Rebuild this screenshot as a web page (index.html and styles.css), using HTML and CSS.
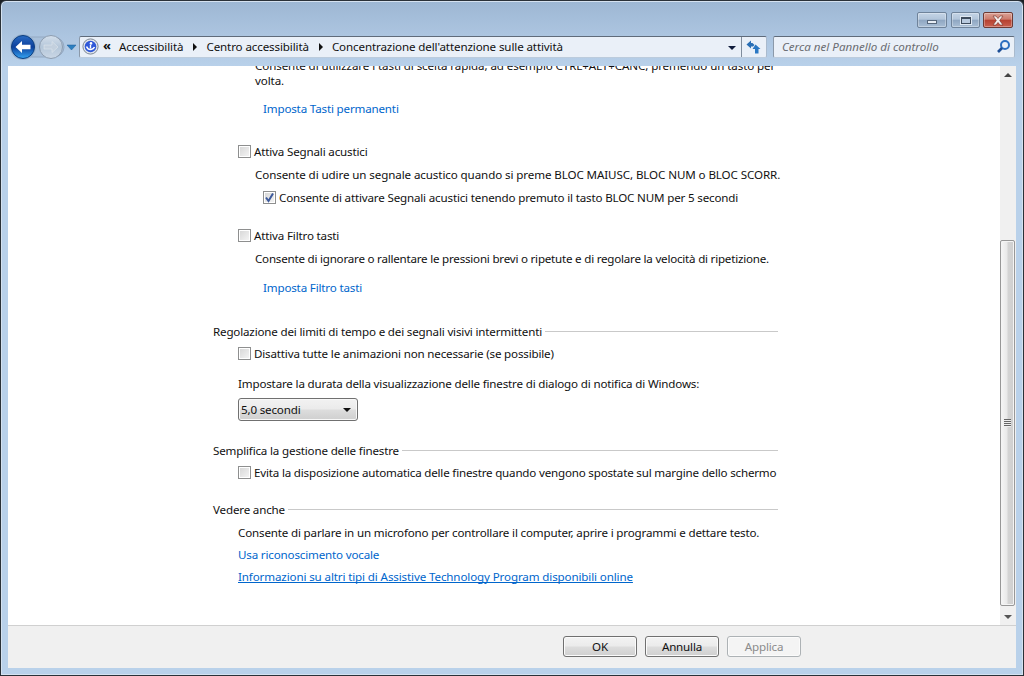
FILE: index.html
```html
<!DOCTYPE html>
<html lang="it">
<head>
<meta charset="utf-8">
<title>Concentrazione dell'attenzione sulle attività</title>
<link rel="stylesheet" href="styles.css">
</head>
<body>
<div class="window">
  <div class="caption-row">
    <div class="caption-buttons">
      <div class="cap cap-min"><span class="min-glyph"></span></div>
      <div class="cap cap-max"><span class="max-glyph"></span></div>
      <div class="cap cap-close">
        <svg width="16" height="11" viewBox="0 0 16 11"><path d="M3 1 H6 L8 3.5 L10 1 H13 L9.7 5.5 L13 10 H10 L8 7.5 L6 10 H3 L6.3 5.5 Z" fill="#f4eeee" stroke="#6f2c22" stroke-width=".6"/></svg>
      </div>
    </div>
  </div>
  <div class="toolbar">
    <div class="nav">
      <svg width="70" height="30" viewBox="0 0 70 30">
        <defs>
          <linearGradient id="bk" x1="0" y1="0" x2="0" y2="1"><stop offset="0" stop-color="#2a6cc4"/><stop offset=".5" stop-color="#0c3f9c"/><stop offset="1" stop-color="#35a4f2"/></linearGradient>
          <linearGradient id="fw" x1="0" y1="0" x2="0" y2="1"><stop offset="0" stop-color="#d5e0ec"/><stop offset=".5" stop-color="#b4c6d9"/><stop offset="1" stop-color="#cbd8e6"/></linearGradient>
        </defs>
        <rect x="14" y="5" width="42" height="20" rx="10" fill="#a9c0da" stroke="#94a9c2"/>
        <circle cx="15" cy="15" r="13" fill="#9db4cf"/>
        <circle cx="15" cy="15" r="11.5" fill="url(#bk)" stroke="#0c3f80"/>
        <path d="M7.5 15 L14 9 V12.7 H22.5 V17.3 H14 V21 Z" fill="#fff"/>
        <circle cx="43" cy="15" r="11.5" fill="url(#fw)" stroke="#8d9db0"/>
        <path d="M50 15 L44 9.5 V13 H36 V17 H44 V20.5 Z" fill="#c3d0de" stroke="#dfe7ef" stroke-width=".6"/>
        <path d="M59 13 H68 L63.5 18 Z" fill="#2c7fc0" stroke="#1c5f9a" stroke-width=".5"/>
      </svg>
    </div>
    <div class="address">
      <svg class="cp-icon" width="17" height="17" viewBox="0 0 17 17"><circle cx="8.5" cy="8.5" r="7.6" fill="#dfe4ea" stroke="#7d8794"/><circle cx="8.5" cy="8.5" r="5.8" fill="#2f58d8"/><circle cx="9" cy="5.4" r="1.3" fill="#fff"/><path d="M4.5 8.5 Q6 12 9 11.5 Q11.5 11 12.5 9" stroke="#fff" stroke-width="1.6" fill="none"/><path d="M8.5 7 V10.5" stroke="#fff" stroke-width="1.4"/></svg>
      <span class="chev">«</span>
      <span class="crumb">Accessibilità</span><span class="crumb-arrow"></span>
      <span class="crumb">Centro accessibilità</span><span class="crumb-arrow"></span>
      <span class="crumb">Concentrazione dell'attenzione sulle attività</span>
      <span class="addr-spacer"></span>
      <span class="addr-drop"></span>
      <span class="addr-refresh">
        <svg width="16" height="14" viewBox="0 0 16 14"><path d="M0.5 4.5 L5 0.5 V3 H6.5 L8.5 5 L7 6.5 H5 V8.5 Z" fill="#2a6fb5"/><path d="M9.5 4.5 L14.5 9 H12.5 V13.5 H9 V9 H6.5 Z" fill="#2a78c4"/></svg>
      </span>
    </div>
    <div class="search">
      <span class="search-text">Cerca nel Pannello di controllo</span>
      <svg width="15" height="15" viewBox="0 0 15 15"><circle cx="9" cy="6" r="4" fill="none" stroke="#2d6fc0" stroke-width="2"/><path d="M6 9 L2 13" stroke="#1e4f96" stroke-width="2.6"/></svg>
    </div>
  </div>
  <div class="pane">
    <div class="content">
      <div class="scroller">
        <p class="para first loose">Consente di utilizzare i tasti di scelta rapida, ad esempio CTRL+ALT+CANC, premendo un tasto per<br>volta.</p>
        <a class="link link-set gap-link1">Imposta Tasti permanenti</a>
        <label class="check gap-check1"><span class="box"></span>Attiva Segnali acustici</label>
        <p class="para gap-p1 loose">Consente di udire un segnale acustico quando si preme BLOC MAIUSC, BLOC NUM o BLOC SCORR.</p>
        <label class="check sub gap-sub"><span class="box on"><svg width="11" height="11" viewBox="0 0 11 11"><path d="M2 5.5 L4.5 9 L9 1.5" stroke="#3d5a9c" stroke-width="2" fill="none"/></svg></span>Consente di attivare Segnali acustici tenendo premuto il tasto BLOC NUM per 5 secondi</label>
        <label class="check gap-check2"><span class="box"></span>Attiva Filtro tasti</label>
        <p class="para gap-p1 tight">Consente di ignorare o rallentare le pressioni brevi o ripetute e di regolare la velocità di ripetizione.</p>
        <a class="link link-set gap-link2">Imposta Filtro tasti</a>
        <h2 class="heading gap-h1"><span>Regolazione dei limiti di tempo e dei segnali visivi intermittenti</span></h2>
        <label class="check gap-c3"><span class="box"></span>Disattiva tutte le animazioni non necessarie (se possibile)</label>
        <p class="para2 gap-p3">Impostare la durata della visualizzazione delle finestre di dialogo di notifica di Windows:</p>
        <div class="select"><span>5,0 secondi</span><i class="sel-arrow"></i></div>
        <h2 class="heading gap-h2"><span>Semplifica la gestione delle finestre</span></h2>
        <label class="check gap-c3 snug"><span class="box"></span>Evita la disposizione automatica delle finestre quando vengono spostate sul margine dello schermo</label>
        <h2 class="heading gap-h3"><span>Vedere anche</span></h2>
        <p class="para2 gap-p4">Consente di parlare in un microfono per controllare il computer, aprire i programmi e dettare testo.</p>
        <a class="link link2 gap-l3">Usa riconoscimento vocale</a>
        <a class="link link2 under gap-l3 open">Informazioni su altri tipi di Assistive Technology Program disponibili online</a>
      </div>
      <div class="scrollbar">
        <div class="arrow-btn"><i class="up"></i></div>
        <div class="track">
          <div class="thumb"><i class="grip"></i></div>
        </div>
        <div class="arrow-btn"><i class="down"></i></div>
      </div>
    </div>
    <div class="footer">
      <button class="btn">OK</button>
      <button class="btn">Annulla</button>
      <button class="btn off">Applica</button>
    </div>
  </div>
</div>
</body>
</html>
```
FILE: styles.css
```css
* { box-sizing: border-box; }
html, body { margin: 0; padding: 0; background: #1a1f24; }
body { width: 1024px; height: 676px; overflow: hidden; font-family: "Noto Sans", "Open Sans", sans-serif; font-size: 11.6px; letter-spacing: -0.17px; color: #111; }
.loose { letter-spacing: -0.1px; }
.tight { letter-spacing: -0.22px; }
.snug { letter-spacing: -0.19px; }
.open { letter-spacing: -0.13px; }
.window { width: 1024px; height: 676px; display: flex; flex-direction: column; border: 1px solid #2a3138; border-radius: 6px 6px 0 0; padding: 0 7px 7px; background: linear-gradient(#9db7d3 0, #a6bfdb 20px, #b9d1ea 66px, #b9d1ea 100%); box-shadow: inset 0 0 0 1px #d5e2f0; }
.caption-row { height: 26px; flex: none; display: flex; justify-content: flex-end; padding-top: 11px; padding-right: 3px; }
.caption-buttons { display: flex; gap: 3px; height: 16px; }
.cap { width: 30px; height: 16px; border: 1px solid #6f839a; border-radius: 2px; display: flex; align-items: center; justify-content: center; background: linear-gradient(#c4d4e6 0, #b2c5da 45%, #8ea6c1 50%, #a9bed5 100%); box-shadow: inset 0 0 0 1px rgba(255,255,255,.3); }
.cap-min { margin-right: 1px; }
.cap-max { width: 29px; }
.cap-close { background: linear-gradient(#dba195 0, #cc7b6c 45%, #b5402f 50%, #c9604f 100%); border-color: #6d3a34; }
.min-glyph { width: 10px; height: 4px; margin-top: 4px; background: #e8eef5; border: 1px solid #56677b; }
.max-glyph { width: 10px; height: 7px; background: #b9cade; border: 1px solid #3e4c5d; border-top-width: 2px; box-shadow: 0 0 0 1px #dfe8f2; }
.toolbar { height: 39px; flex: none; display: flex; align-items: flex-start; padding-top: 9px; }
.nav { width: 71px; margin-top: -4px; flex: none; }
.address { width: 688px; height: 22px; flex: none; display: flex; align-items: center; padding-bottom: 1px; background: #eaf0f8; border: 1px solid #6f7f92; border-color: #5f6b7a #a9bacd #bcccdd #8b99a9; border-radius: 2px; }
.cp-icon { margin-left: 2px; flex: none; }
.chev { margin-left: 4px; width: 16px; font-size: 13px; font-weight: 700; line-height: 16px; margin-top: -3px; }
.crumb { white-space: nowrap; letter-spacing: -0.12px; }
.crumb-arrow { width: 0; height: 0; margin: 0 9px 0 10px; border-left: 4px solid #111; border-top: 4px solid transparent; border-bottom: 4px solid transparent; flex: none; }
.addr-spacer { flex: 1; }
.addr-drop { width: 0; height: 0; border-top: 4px solid #101c3c; border-left: 4px solid transparent; border-right: 4px solid transparent; margin-right: 5px; margin-top: 2px; }
.addr-refresh { width: 25px; height: 20px; margin-bottom: -1px; border-left: 1px solid #7f8c9c; display: flex; align-items: center; justify-content: center; }
.search { width: 242px; height: 22px; margin-left: 6px; flex: none; display: flex; align-items: center; justify-content: space-between; padding: 0 3px 1px 8px; background: #eaf0f8; border: 1px solid #8a99aa; border-color: #5f6b7a #a9bacd #bcccdd #8b99a9; border-radius: 2px; }
.search-text { font-style: italic; color: #6a6d72; letter-spacing: 0; }
.pane { flex: 1; min-height: 0; display: flex; flex-direction: column; background: #f0f0f0; }
.content { flex: 1; min-height: 0; display: flex; background: #fff; overflow: hidden; }
.scroller { flex: 1; min-width: 0; overflow: hidden; padding-left: 205px; display: flex; flex-direction: column; align-items: flex-start; }
.para, .para2, .link, .check { margin: 0; line-height: 15px; white-space: nowrap; display: block; }
.para { padding-left: 42px; }
.para2 { padding-left: 25px; }
.first { margin-top: -8px; }
.link { color: #0066cc; }
.link-set { padding-left: 50px; }
.link2 { padding-left: 25px; }
.under { text-decoration: underline; text-decoration-skip-ink: none; }
.check { display: flex; align-items: center; padding-left: 25px; }
.check.sub { padding-left: 50px; }
.box { width: 13px; height: 13px; flex: none; margin-right: 3px; border: 1px solid #8e8f8f; background: linear-gradient(135deg, #d5d5d5, #f6f6f6); box-shadow: inset 0 0 0 1px #fff; display: flex; align-items: center; justify-content: center; }
.heading { margin: 0; font-weight: 400; font-size: inherit; line-height: 15px; width: 565px; display: flex; align-items: center; gap: 3px; white-space: nowrap; }
.heading::after { content: ""; flex: 1; height: 1px; background: #c9c9c9; }
.gap-link1 { margin-top: 13px; }
.gap-check1 { margin-top: 28px; }
.gap-p1 { margin-top: 8px; }
.gap-sub { margin-top: 8px; }
.gap-check2 { margin-top: 23px; }
.gap-link2 { margin-top: 14px; }
.gap-h1 { margin-top: 29px; }
.gap-c3 { margin-top: 7px; }
.gap-p3 { margin-top: 15px; }
.gap-h2 { margin-top: 22px; }
.gap-h3 { margin-top: 22px; }
.gap-p4 { margin-top: 8px; }
.gap-l3 { margin-top: 7px; }
.select { margin: 7px 0 0 25px; width: 120px; height: 23px; border: 1px solid #707070; border-radius: 3px; background: linear-gradient(#f2f2f2 0, #ebebeb 48%, #dddddd 52%, #cfcfcf 100%); box-shadow: inset 0 0 0 1px #f8f8f8; display: flex; align-items: center; justify-content: space-between; padding: 0 3px 0 2px; }
.sel-arrow { width: 0; height: 0; margin-right: 3px; border-top: 4px solid #111; border-left: 4px solid transparent; border-right: 4px solid transparent; }
.scrollbar { width: 16px; flex: none; margin-right: 0; background: #f0f0f0; display: flex; flex-direction: column; }
.arrow-btn { height: 17px; flex: none; display: flex; align-items: center; justify-content: center; }
.up { width: 0; height: 0; border-bottom: 4px solid #444; border-left: 4px solid transparent; border-right: 4px solid transparent; }
.down { width: 0; height: 0; border-top: 4px solid #555; border-left: 4px solid transparent; border-right: 4px solid transparent; }
.track { flex: 1; min-height: 0; padding-top: 157px; display: flex; }
.thumb { width: 15px; height: 366px; border: 1px solid #979797; border-radius: 2px; background: linear-gradient(90deg, #f6f6f6, #e9e9e9 45%, #d4d4d4 55%, #cfcfcf); box-shadow: inset 0 0 0 1px #f4f4f4; display: flex; align-items: center; justify-content: center; }
.grip { width: 7px; height: 8px; background: repeating-linear-gradient(#666 0 1px, #eee 1px 2px); }
.footer { height: 43px; flex: none; border-top: 1px solid #d0d0d0; display: flex; justify-content: flex-end; align-items: flex-start; gap: 8px; padding: 10px 215px 0 0; }
.btn { width: 74px; height: 21px; padding: 0; border: 1px solid #707070; border-radius: 3px; font: inherit; letter-spacing: inherit; color: #111; background: linear-gradient(#f3f3f3 0, #ebebeb 48%, #dddddd 52%, #cfcfcf 100%); box-shadow: inset 0 0 0 1px #fbfbfb; }
.btn.off { color: #8b8b8b; background: #f4f4f4; border-color: #adb2b5; }
```
